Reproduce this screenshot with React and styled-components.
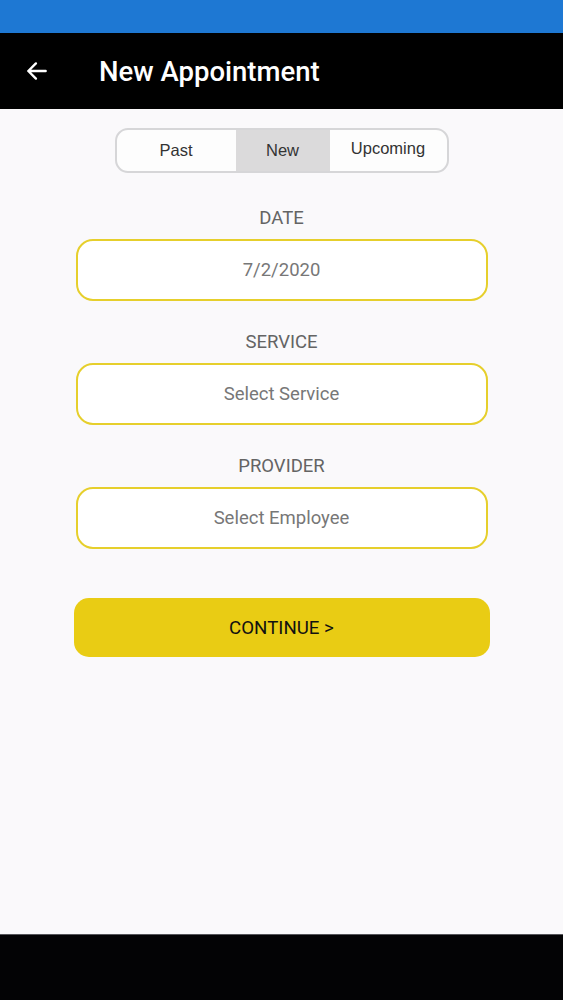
import React, { useState } from "react";
import styled, { createGlobalStyle } from "styled-components";

const GlobalStyle = createGlobalStyle`
  html, body {
    margin: 0;
    padding: 0;
    background: #faf9fb;
  }
  body {
    font-family: Roboto, "Noto Sans", sans-serif;
  }
`;

const Screen = styled.div`
  width: 563px;
  height: 1000px;
  display: flex;
  flex-direction: column;
  background: #faf9fb;
`;

const StatusBar = styled.div`
  height: 33px;
  background: #1e78d3;
  flex-shrink: 0;
`;

const Header = styled.header`
  height: 76px;
  background: #000;
  display: flex;
  align-items: center;
  padding-left: 24px;
  gap: 49px;
  flex-shrink: 0;
`;

const BackButton = styled.button`
  width: 26px;
  height: 26px;
  padding: 0;
  border: none;
  background: none;
  display: flex;
  align-items: center;
  justify-content: center;
  cursor: pointer;
`;

const Title = styled.h1`
  margin: 0;
  color: #fff;
  font-size: 27.5px;
  font-weight: 500;
`;

const Content = styled.main`
  flex: 1;
  display: flex;
  flex-direction: column;
  align-items: center;
  padding-top: 19px;
`;

const Segmented = styled.div`
  display: flex;
  width: 334px;
  height: 45px;
  box-sizing: border-box;
  border: 2px solid #d6d6d8;
  border-radius: 13px;
  overflow: hidden;
  background: #fdfdfd;
  margin-bottom: 34px;
`;

const Segment = styled.button`
  width: ${(p) => p.$width}px;
  border: none;
  padding: 0 0 ${(p) => p.$lift}px;
  background: ${(p) => (p.$active ? "#dbdadb" : "transparent")};
  font-family: "Liberation Sans", Arial, sans-serif;
  font-size: 16.5px;
  color: #333;
  cursor: pointer;
`;

const Field = styled.div`
  display: flex;
  flex-direction: column;
  align-items: center;
  gap: 10px;
  margin-bottom: 30px;
`;

const Label = styled.div`
  font-size: 18.5px;
  color: #646464;
  line-height: 22px;
`;

const InputBox = styled.div`
  width: 412px;
  height: 62px;
  box-sizing: border-box;
  border: 2px solid #e6cf2c;
  border-radius: 17px;
  background: #fff;
  display: flex;
  align-items: center;
  justify-content: center;
  font-size: 18.5px;
  color: #777;
`;

const ContinueButton = styled.button`
  margin-top: 19px;
  width: 416px;
  height: 59px;
  border: none;
  border-radius: 15px;
  background: #e9cc14;
  font-family: Roboto, sans-serif;
  font-size: 18.7px;
  color: #111;
  cursor: pointer;
`;

const NavBar = styled.div`
  height: 65px;
  background: #030305;
  border-top: 1px solid #55555a;
  flex-shrink: 0;
`;

const tabs = [
  { name: "Past", width: 119, lift: 0 },
  { name: "New", width: 94, lift: 0 },
  { name: "Upcoming", width: 117, lift: 4 },
];

const fields = [
  { label: "DATE", value: "7/2/2020" },
  { label: "SERVICE", value: "Select Service" },
  { label: "PROVIDER", value: "Select Employee" },
];

export default function App() {
  const [tab, setTab] = useState("New");

  return (
    <Screen>
      <GlobalStyle />
      <StatusBar />
      <Header>
        <BackButton aria-label="Back">
          <svg width="26" height="26" viewBox="0 0 24 24" fill="none">
            <path
              d="M20 12H4M11 5l-7 7 7 7"
              stroke="#fff"
              strokeWidth="2.2"
              strokeLinecap="round"
              strokeLinejoin="round"
            />
          </svg>
        </BackButton>
        <Title>New Appointment</Title>
      </Header>
      <Content>
        <Segmented>
          {tabs.map((t) => (
            <Segment
              key={t.name}
              $width={t.width}
              $lift={t.lift}
              $active={tab === t.name}
              onClick={() => setTab(t.name)}
            >
              {t.name}
            </Segment>
          ))}
        </Segmented>
        {fields.map((f) => (
          <Field key={f.label}>
            <Label>{f.label}</Label>
            <InputBox>{f.value}</InputBox>
          </Field>
        ))}
        <ContinueButton>CONTINUE &gt;</ContinueButton>
      </Content>
      <NavBar />
    </Screen>
  );
}
